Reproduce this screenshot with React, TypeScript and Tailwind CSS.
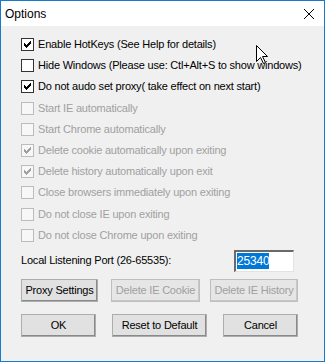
import React from "react";

const font = { fontFamily: '"Liberation Sans", Arial, sans-serif' };

const Check = ({ disabled }: { disabled?: boolean }) => (
  <svg width="7" height="7" viewBox="0 0 7 7" shapeRendering="crispEdges" fill={disabled ? "#a0a0a0" : "#000000"}>
    <rect x="6" y="0" width="1" height="1" />
    <rect x="5" y="1" width="2" height="1" />
    <rect x="0" y="2" width="1" height="1" />
    <rect x="4" y="2" width="3" height="1" />
    <rect x="0" y="3" width="2" height="1" />
    <rect x="3" y="3" width="3" height="1" />
    <rect x="0" y="4" width="5" height="1" />
    <rect x="1" y="5" width="3" height="1" />
    <rect x="2" y="6" width="1" height="1" />
  </svg>
);

type Opt = { label: string; checked: boolean; disabled: boolean };

const options: Opt[] = [
  { label: "Enable HotKeys (See Help for details)", checked: true, disabled: false },
  { label: "Hide Windows (Please use: Ctl+Alt+S to show windows)", checked: false, disabled: false },
  { label: "Do not audo set proxy( take effect on next start)", checked: true, disabled: false },
  { label: "Start IE automatically", checked: false, disabled: true },
  { label: "Start Chrome automatically", checked: false, disabled: true },
  { label: "Delete cookie automatically upon exiting", checked: true, disabled: true },
  { label: "Delete history automatically upon exit", checked: true, disabled: true },
  { label: "Close browsers immediately upon exiting", checked: false, disabled: true },
  { label: "Do not close IE upon exiting", checked: false, disabled: true },
  { label: "Do not close Chrome upon exiting", checked: false, disabled: true },
];

const Row = ({ o }: { o: Opt }) => (
  <div className="flex items-center h-[21.2px]">
    <div
      className={
        "w-[13px] h-[13px] border flex items-center justify-center " +
        (o.disabled ? "border-[#bcbcbc] bg-[#f7f7f7]" : "border-[#333333] bg-white")
      }
    >
      {o.checked && <Check disabled={o.disabled} />}
    </div>
    <span
      className={"ml-[4px] text-[11px] leading-none tracking-[-0.2px] whitespace-nowrap " + (o.disabled ? "text-[#a0a0a0]" : "text-black")}
    >
      {o.label}
    </span>
  </div>
);

const Btn = ({ children, w, disabled, className = "" }: { children: React.ReactNode; w: string; disabled?: boolean; className?: string }) => (
  <div
    className={
      "h-[23px] flex items-center justify-center bg-[#e1e1e1] border border-[#adadad] shadow-[inset_-1px_-1px_0_#8a8a8a] text-[11px] leading-none tracking-[-0.2px] whitespace-nowrap " +
      (disabled ? "text-[#a0a0a0] bg-[#e6e6e6] border-[#bfbfbf] shadow-[inset_-1px_-1px_0_#c8c8c8] " : "text-black ") +
      w +
      " " +
      className
    }
  >
    {children}
  </div>
);

export default function App() {
  return (
    <div style={font} className="relative w-[325px] h-[362px] border border-[#1979ca] bg-[#f0f0f0] flex flex-col overflow-hidden">
      <div className="h-[25px] bg-white flex items-center justify-between shrink-0">
        <span className="ml-[4px] text-[12px] text-black leading-none">Options</span>
        <svg width="10" height="10" viewBox="0 0 10 10" className="mr-[10px]">
          <path d="M0 0 L10 10 M10 0 L0 10" stroke="#000" strokeWidth="1" />
        </svg>
      </div>
      <div className="flex flex-col pl-[20px] pt-[8px]">
        {options.map((o) => (
          <Row key={o.label} o={o} />
        ))}
        <div className="flex items-center h-[22px] mt-[4px]">
          <span className="text-[11px] leading-none tracking-[-0.2px] text-black whitespace-nowrap">Local Listening Port (26-65535):</span>
          <div className="ml-auto mr-[30px] w-[60px] h-[22px] bg-white border-t-2 border-l-2 border-b border-r border-t-[#696969] border-l-[#696969] border-b-[#e3e3e3] border-r-[#e3e3e3] flex items-center pl-[1px]">
            <span className="bg-[#0078d7] text-white text-[12px] leading-[16px] px-[0px] tracking-[-0.2px]">25340</span>
          </div>
        </div>
        <div className="flex mt-[7px]">
          <Btn w="w-[77px]">Proxy Settings</Btn>
          <Btn w="w-[89px]" disabled className="ml-[13px]">Delete IE Cookie</Btn>
          <Btn w="w-[88px]" disabled className="ml-[10px]">Delete IE History</Btn>
        </div>
        <div className="flex mt-[12px]">
          <Btn w="w-[75px]">OK</Btn>
          <Btn w="w-[95px]" className="ml-[16px]">Reset to Default</Btn>
          <Btn w="w-[75px]" className="ml-[16px]">Cancel</Btn>
        </div>
      </div>
      <svg width="13" height="20" viewBox="0 0 13 20" className="absolute left-[255px] top-[44px]">
        <path d="M0.5 0.5 L0.5 16.5 L4.5 12.5 L7.5 18.5 L9.5 17.5 L6.5 11.5 L11.5 11.5 Z" fill="#fff" stroke="#000" strokeWidth="1" />
      </svg>
    </div>
  );
}
